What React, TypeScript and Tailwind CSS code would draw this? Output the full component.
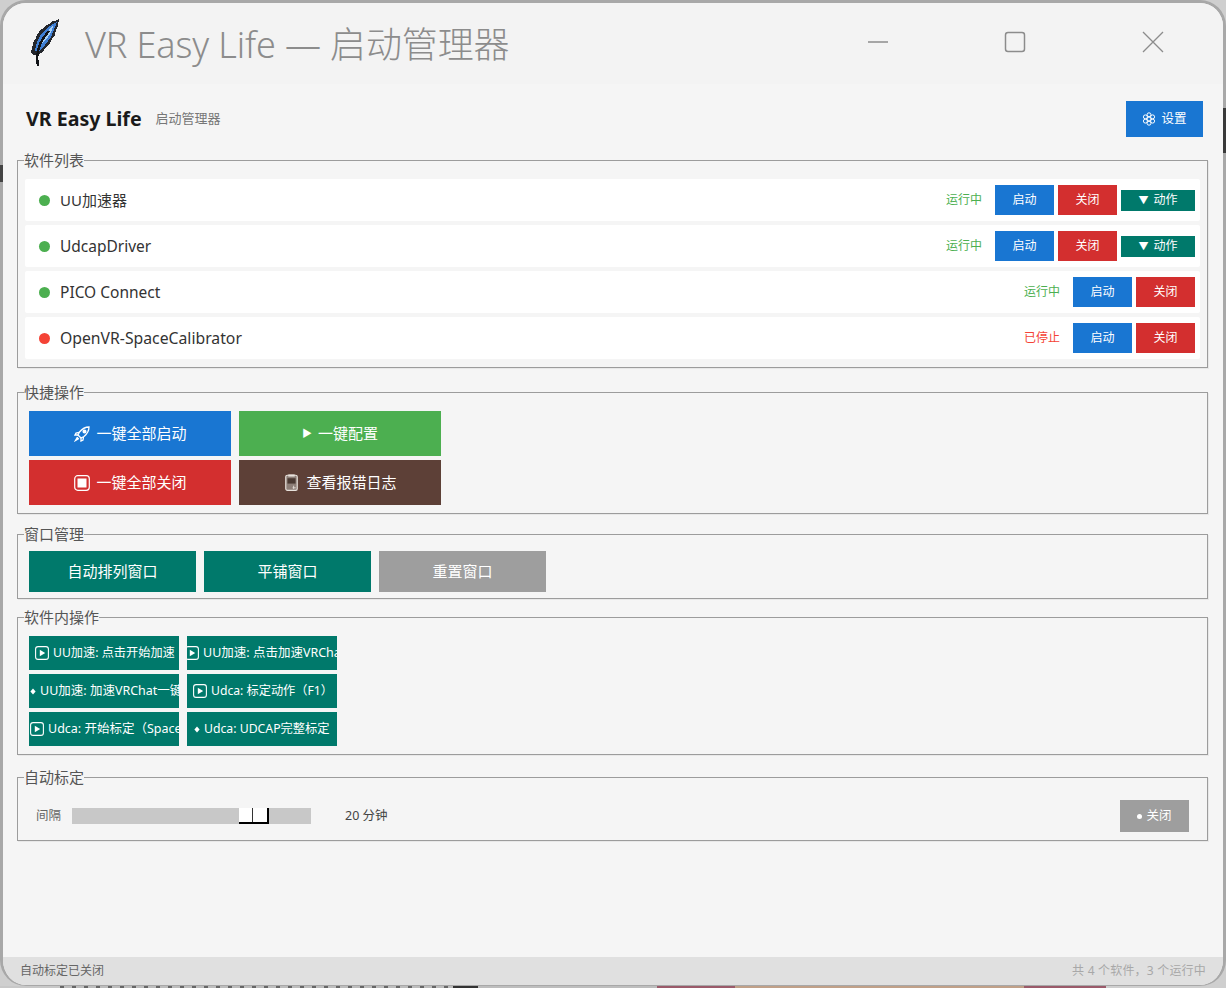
import React from "react";

const font = "font-['Noto_Sans','Noto_Sans_CJK_SC',sans-serif]";

function Feather() {
  return (
    <svg width="34" height="52" viewBox="0 0 34 52" className="shrink-0" shapeRendering="crispEdges">
      <path d="M31 1 L27 3 L24 3 L21 6 L18 7 L16 10 L13 11 L11 14 L9 16 L8 20 L6 22 L5 26 L4 30 L3 35 L5 37 L10 37 L13 35 L16 32 L19 28 L22 25 L24 21 L27 17 L28 12 L30 8 Z" fill="#23262c" />
      <path d="M29 4 L25 6 L22 8 L19 10 L16 13 L13 16 L11 20 L9 24 L8 28 L7 33 L11 33 L14 30 L17 27 L20 23 L23 19 L25 14 L27 9 Z" fill="#3f7fd4" />
      <path d="M25 8 L22 10 L21 13 L18 15 L17 18 L14 20 L14 23 L11 26 L13 26 L16 24 L18 21 L20 19 L22 16 L24 12 Z" fill="#a6d0f6" />
      <path d="M21 13 L16 19 L12 26 L10 33 L9 40 L10 48" fill="none" stroke="#111317" strokeWidth="2.4" />
    </svg>
  );
}

function Gear() {
  return (
    <svg width="14" height="14" viewBox="0 0 14 14" fill="none" stroke="white" strokeWidth="1">
      <circle cx="7" cy="7" r="2" />
      <circle cx="7" cy="2.8" r="2" />
      <circle cx="7" cy="11.2" r="2" />
      <circle cx="3.4" cy="4.9" r="2" />
      <circle cx="10.6" cy="4.9" r="2" />
      <circle cx="3.4" cy="9.1" r="2" />
      <circle cx="10.6" cy="9.1" r="2" />
    </svg>
  );
}

function RocketIcon() {
  return (
    <svg width="16" height="16" viewBox="0 0 16 16" fill="none" stroke="white" strokeWidth="1.3">
      <path d="M15 1 C 11 1 8 3 5.5 6 L 4 9 L 7 12 L 10 10.5 C 13 8 15 5 15 1 Z" />
      <circle cx="10.5" cy="5.5" r="1.4" fill="white" />
      <path d="M5 6.5 L 2 7 L 1 9 L 4 9 M 9.5 11 L 9 14 L 7 15 L 7 12" />
      <path d="M3.5 11 L 1.5 14.5 L 5 12.5" fill="white" />
    </svg>
  );
}

function StopIcon() {
  return (
    <svg width="16" height="16" viewBox="0 0 16 16" fill="none">
      <rect x="0.7" y="0.7" width="14.6" height="14.6" rx="3" stroke="white" strokeWidth="1.2" />
      <rect x="3.5" y="3.5" width="9" height="9" fill="white" />
    </svg>
  );
}

function LogIcon() {
  return (
    <svg width="13" height="17" viewBox="0 0 12 16" fill="none">
      <rect x="0.6" y="1.2" width="10.8" height="14.2" rx="1.5" fill="#8d7f78" stroke="#e8e2dc" strokeWidth="1.1" />
      <rect x="3" y="0.4" width="6" height="2" fill="#e8e2dc" />
      <rect x="2.2" y="4" width="7.6" height="5" fill="#4a3a33" />
      <path d="M7 13 L 10 13 M 8 11 L 8 14" stroke="#e8e2dc" strokeWidth="0.8" />
    </svg>
  );
}

function PlayBox() {
  return (
    <svg width="14" height="14" viewBox="0 0 14 14" fill="none" className="shrink-0">
      <rect x="0.6" y="0.6" width="12.8" height="12.8" rx="2.5" stroke="white" strokeWidth="1.1" />
      <path d="M4.8 3.8 L 10.2 7 L 4.8 10.2 Z" fill="white" />
    </svg>
  );
}

function Diamond() {
  return (
    <svg width="6" height="7" viewBox="0 0 6 7" className="shrink-0">
      <path d="M3 0.5 L 5.6 3.5 L 3 6.5 L 0.4 3.5 Z" fill="white" />
    </svg>
  );
}

function Group({ title, className, children }: { title: string; className: string; children: React.ReactNode }) {
  return (
    <fieldset className={`border border-[#9c9c9c] shadow-[1px_1px_0_#e8e8e8] ${className}`}>
      <legend className="ml-[6px] p-0 text-[15px] leading-[22px] text-[#555555]">{title}</legend>
      {children}
    </fieldset>
  );
}

function Row({ name, nameClass, dot, status, statusColor, action }: { name: string; nameClass: string; dot: string; status: string; statusColor: string; action?: boolean }) {
  return (
    <div className="flex h-[42px] items-center rounded-[2px] bg-white pl-[14px] pr-[5px]">
      <span className={`h-[11px] w-[11px] rounded-full ${dot}`} />
      <span className={`ml-[10px] flex-1 leading-[22px] text-[#333333] ${nameClass}`}>{name}</span>
      <span className={`mr-[13px] text-[12px] ${statusColor}`}>{status}</span>
      <div className="flex items-center gap-[4px]">
        <button className="h-[30px] w-[59px] bg-[#1976d2] text-[12px] text-white">启动</button>
        <button className="h-[30px] w-[59px] bg-[#d32f2f] text-[12px] text-white">关闭</button>
        {action && (
          <button className="flex h-[21px] w-[74px] items-center justify-center gap-[5px] bg-[#00796b] text-[12px] text-white">
            <span className="text-[10px]">▼</span>
            <span>动作</span>
          </button>
        )}
      </div>
    </div>
  );
}

function QuickBtn({ color, gap, icon, label }: { color: string; gap: string; icon: React.ReactNode; label: string }) {
  return (
    <button className={`flex h-[45px] w-[202px] items-center justify-center text-[15px] text-white ${gap} ${color}`}>
      {icon}
      <span>{label}</span>
    </button>
  );
}

function WinBtn({ color, label }: { color: string; label: string }) {
  return <button className={`h-[41px] w-[167px] text-[15px] text-white ${color}`}>{label}</button>;
}

function OpBtn({ icon, label, offset, size }: { icon: React.ReactNode; label: string; offset: string; size: string }) {
  return (
    <div className={`flex h-[34px] w-[150px] items-center overflow-hidden bg-[#00796b] leading-[18px] text-white ${size}`}>
      <div className={`flex shrink-0 items-center gap-[4px] whitespace-nowrap ${offset}`}>
        {icon}
        <span>{label}</span>
      </div>
    </div>
  );
}

export default function App() {
  return (
    <div className={`relative flex h-[988px] w-[1226px] flex-col overflow-hidden bg-[#cfcfcf] ${font}`}>
      <div className="flex h-[986px] shrink-0 flex-col overflow-hidden rounded-[26px] border-x-[3px] border-t-[3px] border-b border-[#a8a8a8] bg-[#f5f5f5]">
        <div className="flex h-[81px] shrink-0 items-center bg-[#f3f3f3]">
          <div className="ml-[25px]">
            <Feather />
          </div>
          <span className="ml-[23px] mt-[2px] text-[36px] font-light tracking-[-0.12px] text-[#8c8c8c]">VR Easy Life — 启动管理器</span>
          <div className="mb-[4px] ml-auto flex items-center">
            <svg width="22" height="22" viewBox="0 0 22 22" className="mr-[115px]" fill="none" stroke="#8c8c8c" strokeWidth="1.5">
              <path d="M1 11 H21" />
            </svg>
            <svg width="22" height="22" viewBox="0 0 22 22" className="mr-[116px]" fill="none" stroke="#8c8c8c" strokeWidth="1.5">
              <rect x="1.5" y="1.5" width="19" height="19" rx="2.5" />
            </svg>
            <svg width="22" height="22" viewBox="0 0 22 22" className="mr-[59px]" fill="none" stroke="#8c8c8c" strokeWidth="1.3">
              <path d="M1 1 L21 21 M21 1 L1 21" />
            </svg>
          </div>
        </div>

        <div className="flex flex-1 flex-col pl-[14px] pr-[15px]">
          <div className="mt-[17px] mb-[12px] flex h-[36px] shrink-0 items-center">
            <span className="ml-[9px] text-[19.6px] font-bold text-[#1a1a1a]">VR Easy Life</span>
            <span className="ml-[14px] text-[13px] text-[#777777]">启动管理器</span>
            <button className="ml-auto mr-[5px] flex h-[36px] w-[77px] items-center justify-center gap-[5px] bg-[#1976d2] text-[12.5px] text-white">
              <Gear />
              <span>设置</span>
            </button>
          </div>

          <Group title="软件列表" className="pb-[8px]">
            <div className="mx-[7px] mt-[8px] flex flex-col gap-[4px]">
              <Row name="UU加速器" nameClass="text-[15px]" dot="bg-[#4caf50]" status="运行中" statusColor="text-[#4caf50]" action />
              <Row name="UdcapDriver" nameClass="text-[15.5px]" dot="bg-[#4caf50]" status="运行中" statusColor="text-[#4caf50]" action />
              <Row name="PICO Connect" nameClass="text-[15.5px]" dot="bg-[#4caf50]" status="运行中" statusColor="text-[#4caf50]" />
              <Row name="OpenVR-SpaceCalibrator" nameClass="text-[15.75px]" dot="bg-[#f44336]" status="已停止" statusColor="text-[#f44336]" />
            </div>
          </Group>

          <Group title="快捷操作" className="mt-[13px] pb-[8px]">
            <div className="ml-[11px] mt-[8px] flex flex-col gap-[4px]">
              <div className="flex gap-[8px]">
                <QuickBtn color="bg-[#1976d2]" gap="gap-[6px] pl-[1px]" icon={<RocketIcon />} label="一键全部启动" />
                <QuickBtn color="bg-[#4caf50]" gap="gap-[6px]" icon={<span className="text-[10px]">▶</span>} label="一键配置" />
              </div>
              <div className="flex gap-[8px]">
                <QuickBtn color="bg-[#d32f2f]" gap="gap-[6px] pl-[1px]" icon={<StopIcon />} label="一键全部关闭" />
                <QuickBtn color="bg-[#5d4037]" gap="gap-[8px] pl-[2px]" icon={<LogIcon />} label="查看报错日志" />
              </div>
            </div>
          </Group>

          <Group title="窗口管理" className="mt-[9px] pb-[6px]">
            <div className="ml-[11px] mt-[6px] flex gap-[8px]">
              <WinBtn color="bg-[#00796b]" label="自动排列窗口" />
              <WinBtn color="bg-[#00796b]" label="平铺窗口" />
              <WinBtn color="bg-[#9e9e9e]" label="重置窗口" />
            </div>
          </Group>

          <Group title="软件内操作" className="mt-[7px] pb-[8px]">
            <div className="ml-[11px] mt-[8px] grid w-[308px] grid-cols-2 gap-x-[8px] gap-y-[4px]">
              <OpBtn size="text-[12.2px]" offset="ml-[6px]" icon={<PlayBox />} label="UU加速: 点击开始加速" />
              <OpBtn size="text-[12.5px]" offset="ml-[-2px]" icon={<PlayBox />} label="UU加速: 点击加速VRChat" />
              <OpBtn size="text-[12.5px]" offset="ml-[1px]" icon={<Diamond />} label="UU加速: 加速VRChat一键" />
              <OpBtn size="text-[12.2px]" offset="ml-[6px]" icon={<PlayBox />} label="Udca: 标定动作（F1）" />
              <OpBtn size="text-[12.5px]" offset="ml-[1px]" icon={<PlayBox />} label="Udca: 开始标定（Space）" />
              <OpBtn size="text-[12.25px]" offset="ml-[7px]" icon={<Diamond />} label="Udca: UDCAP完整标定" />
            </div>
          </Group>

          <Group title="自动标定" className="mt-[11px] pb-[8px]">
            <div className="mt-[12px] flex h-[32px] items-center pl-[18px] pr-[18px]">
              <span className="text-[12.5px] text-[#666666]">间隔</span>
              <div className="ml-[11px] flex h-[16px] w-[239px] items-center justify-end bg-[#c8c8c8] pr-[42px]">
                <div className="flex h-[16px] w-[30px] border-r-2 border-b-2 border-black bg-white">
                  <div className="h-[14px] w-[14px] border-r border-[#333333]" />
                </div>
              </div>
              <span className="ml-[34px] text-[12.5px] text-[#444444]">20 分钟</span>
              <button className="ml-auto flex h-[32px] w-[69px] items-center justify-center gap-[4px] bg-[#9e9e9e] text-[12.5px] text-white">
                <span className="h-[5px] w-[5px] rounded-full bg-white" />
                <span>关闭</span>
              </button>
            </div>
          </Group>
        </div>

        <div className="flex h-[28px] shrink-0 items-center justify-between bg-[#e0e0e0] pl-[17px] pr-[17px] text-[12px]">
          <span className="text-[#666666]">自动标定已关闭</span>
          <span className="tracking-[0.2px] text-[#a8a8a8]">共 4 个软件，3 个运行中</span>
        </div>
      </div>

      <div className="flex h-[2px] shrink-0">
        <div className="w-[60px] bg-[#c8c8c8]" />
        <div className="w-[393px] bg-[repeating-linear-gradient(90deg,#666666_0,#666666_4px,#bdbdbd_4px,#bdbdbd_12px)]" />
        <div className="w-[25px] bg-[#333333]" />
        <div className="w-[179px] bg-[#bdbdbd]" />
        <div className="w-[78px] bg-[#9a5a6a]" />
        <div className="w-[289px] bg-[#c0a088]" />
        <div className="w-[82px] bg-[#9a5a6a]" />
        <div className="flex-1 bg-[#cfcfcf]" />
      </div>

      <div className="absolute left-0 top-[165px] h-[17px] w-[3px] bg-[#444444]" />
      <div className="absolute right-0 top-[108px] h-[45px] w-[3px] bg-[#3a3a3a]" />
    </div>
  );
}
